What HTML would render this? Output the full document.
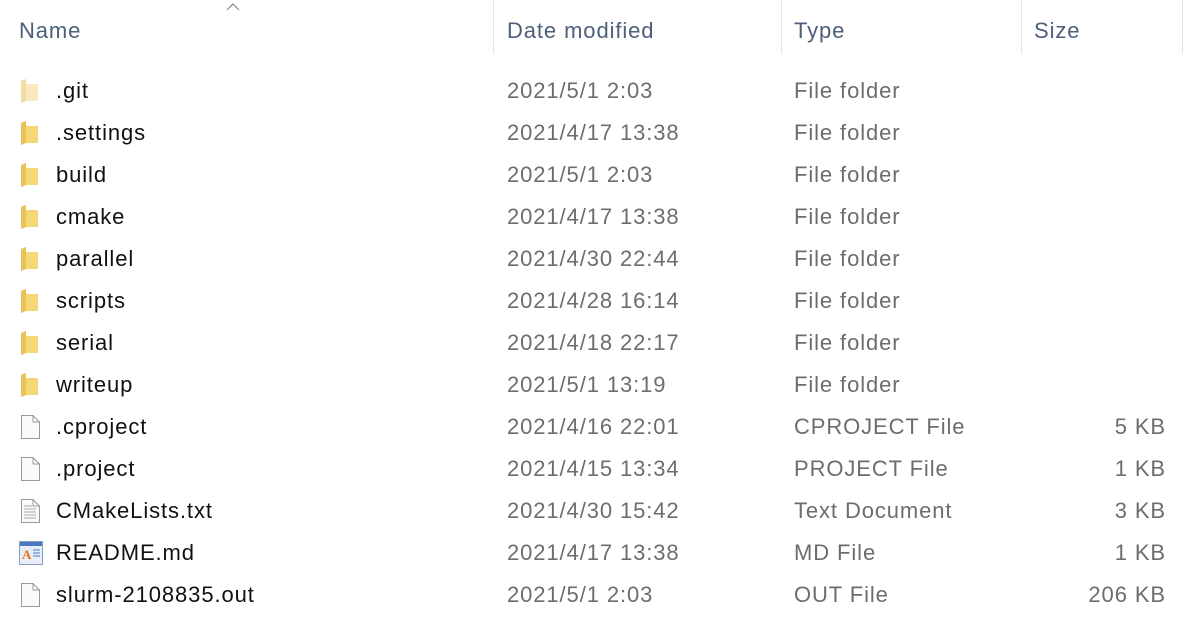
<!DOCTYPE html>
<html><head><style>
body{margin:0;width:1193px;height:626px;background:#fff;font-family:"Liberation Sans",sans-serif;overflow:hidden;position:relative;letter-spacing:0.9px}
.h{position:absolute;top:18px;font-size:22px;color:#4c607a}
.sep{position:absolute;top:0;width:1px;height:54px;background:#e5e5e5}
.r{position:absolute;left:0;height:42px;width:1193px;font-size:22px;line-height:42px}
.r span{position:absolute;top:0}
.n{left:56px;color:#111}
.d{left:507px;color:#6d6d6d}
.t{left:794px;color:#6d6d6d}
.s{right:27px;color:#6d6d6d}
.r svg{position:absolute;left:18px;top:8px}
</style></head><body>
<svg style="position:absolute;left:225px;top:2px" width="16" height="10"><path d="M2 8 L8 2 L14 8" fill="none" stroke="#888" stroke-width="1.2"/></svg>
<div class="h" style="left:19px">Name</div>
<div class="sep" style="left:493px"></div>
<div class="h" style="left:507px">Date modified</div>
<div class="sep" style="left:781px"></div>
<div class="h" style="left:794px">Type</div>
<div class="sep" style="left:1021px"></div>
<div class="h" style="left:1034px">Size</div>
<div class="sep" style="left:1182px"></div>

<div class="r" style="top:70px"><svg width="24" height="26"><path d="M3 3 L8 1 L8 6 L20 6 L20 23 L8 23 L3 25 Z" fill="#f8e9bf"/><path d="M3 3 L8 1 L8 23 L3 25Z" fill="#efdca6"/></svg><span class="n">.git</span><span class="d">2021/5/1 2:03</span><span class="t">File folder</span></div>
<div class="r" style="top:112px"><svg width="24" height="26"><path d="M3 3 L8 1 L8 6 L20 6 L20 23 L8 23 L3 25 Z" fill="#f6d776"/><path d="M3 3 L8 1 L8 23 L3 25Z" fill="#e8c25a"/></svg><span class="n">.settings</span><span class="d">2021/4/17 13:38</span><span class="t">File folder</span></div>
<div class="r" style="top:154px"><svg width="24" height="26"><path d="M3 3 L8 1 L8 6 L20 6 L20 23 L8 23 L3 25 Z" fill="#f6d776"/><path d="M3 3 L8 1 L8 23 L3 25Z" fill="#e8c25a"/></svg><span class="n">build</span><span class="d">2021/5/1 2:03</span><span class="t">File folder</span></div>
<div class="r" style="top:196px"><svg width="24" height="26"><path d="M3 3 L8 1 L8 6 L20 6 L20 23 L8 23 L3 25 Z" fill="#f6d776"/><path d="M3 3 L8 1 L8 23 L3 25Z" fill="#e8c25a"/></svg><span class="n">cmake</span><span class="d">2021/4/17 13:38</span><span class="t">File folder</span></div>
<div class="r" style="top:238px"><svg width="24" height="26"><path d="M3 3 L8 1 L8 6 L20 6 L20 23 L8 23 L3 25 Z" fill="#f6d776"/><path d="M3 3 L8 1 L8 23 L3 25Z" fill="#e8c25a"/></svg><span class="n">parallel</span><span class="d">2021/4/30 22:44</span><span class="t">File folder</span></div>
<div class="r" style="top:280px"><svg width="24" height="26"><path d="M3 3 L8 1 L8 6 L20 6 L20 23 L8 23 L3 25 Z" fill="#f6d776"/><path d="M3 3 L8 1 L8 23 L3 25Z" fill="#e8c25a"/></svg><span class="n">scripts</span><span class="d">2021/4/28 16:14</span><span class="t">File folder</span></div>
<div class="r" style="top:322px"><svg width="24" height="26"><path d="M3 3 L8 1 L8 6 L20 6 L20 23 L8 23 L3 25 Z" fill="#f6d776"/><path d="M3 3 L8 1 L8 23 L3 25Z" fill="#e8c25a"/></svg><span class="n">serial</span><span class="d">2021/4/18 22:17</span><span class="t">File folder</span></div>
<div class="r" style="top:364px"><svg width="24" height="26"><path d="M3 3 L8 1 L8 6 L20 6 L20 23 L8 23 L3 25 Z" fill="#f6d776"/><path d="M3 3 L8 1 L8 23 L3 25Z" fill="#e8c25a"/></svg><span class="n">writeup</span><span class="d">2021/5/1 13:19</span><span class="t">File folder</span></div>
<div class="r" style="top:406px"><svg width="24" height="26"><path d="M3.5 1.5 H15 L21.5 8 V24.5 H3.5 Z" fill="#fafafa" stroke="#9a9a9a"/><path d="M15 1.5 V8 H21.5" fill="none" stroke="#9a9a9a"/></svg><span class="n">.cproject</span><span class="d">2021/4/16 22:01</span><span class="t">CPROJECT File</span><span class="s">5 KB</span></div>
<div class="r" style="top:448px"><svg width="24" height="26"><path d="M3.5 1.5 H15 L21.5 8 V24.5 H3.5 Z" fill="#fafafa" stroke="#9a9a9a"/><path d="M15 1.5 V8 H21.5" fill="none" stroke="#9a9a9a"/></svg><span class="n">.project</span><span class="d">2021/4/15 13:34</span><span class="t">PROJECT File</span><span class="s">1 KB</span></div>
<div class="r" style="top:490px"><svg width="24" height="26"><path d="M3.5 1.5 H15 L21.5 8 V24.5 H3.5 Z" fill="#fafafa" stroke="#9a9a9a"/><path d="M15 1.5 V8 H21.5" fill="none" stroke="#9a9a9a"/><path d="M6 8h8M6 11h12M6 14h12M6 17h12M6 20h12" stroke="#aaa"/></svg><span class="n">CMakeLists.txt</span><span class="d">2021/4/30 15:42</span><span class="t">Text Document</span><span class="s">3 KB</span></div>
<div class="r" style="top:532px"><svg width="26" height="26"><rect x="1.5" y="1.5" width="23" height="23" fill="#e8eef7" stroke="#8aa0c0"/><rect x="2" y="2" width="22" height="4" fill="#4a78c0"/><text x="4" y="19" font-family="Liberation Serif" font-weight="bold" font-size="13" fill="#e8741a" letter-spacing="0">A</text><path d="M15 10h7M15 13h7M15 16h7" stroke="#4a78c0"/></svg><span class="n">README.md</span><span class="d">2021/4/17 13:38</span><span class="t">MD File</span><span class="s">1 KB</span></div>
<div class="r" style="top:574px"><svg width="24" height="26"><path d="M3.5 1.5 H15 L21.5 8 V24.5 H3.5 Z" fill="#fafafa" stroke="#9a9a9a"/><path d="M15 1.5 V8 H21.5" fill="none" stroke="#9a9a9a"/></svg><span class="n">slurm-2108835.out</span><span class="d">2021/5/1 2:03</span><span class="t">OUT File</span><span class="s">206 KB</span></div>
</body></html>
